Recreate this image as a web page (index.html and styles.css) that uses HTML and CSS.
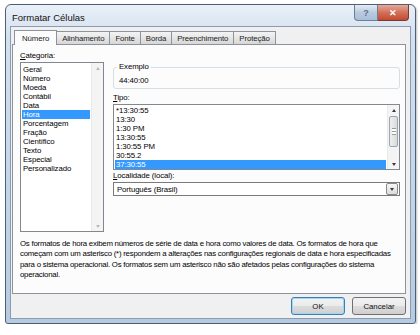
FILE: index.html
```html
<!DOCTYPE html>
<html lang="pt-BR">
<head>
  <meta charset="UTF-8">
  <title>Formatar Células</title>
  <link rel="stylesheet" href="styles.css">
</head>
<body>

  <div class="window">
    <div class="titlebar">
      <div class="title">Formatar Células</div>
      <div class="caption-btns">
        <div class="cap help">?</div>
        <div class="cap close">&#x2715;</div>
      </div>
    </div>

    <div class="client">
      <div class="tabs">
        <div class="tab active">Número</div>
        <div class="tab">Alinhamento</div>
        <div class="tab">Fonte</div>
        <div class="tab">Borda</div>
        <div class="tab">Preenchimento</div>
        <div class="tab">Proteção</div>
      </div>

      <div class="panel">
        <div class="columns">
          <div class="left-col">
            <div class="label"><u>C</u>ategoria:</div>
            <div class="listbox cat-list">
              <div class="items">
                <div class="item">Geral</div>
                <div class="item">Número</div>
                <div class="item">Moeda</div>
                <div class="item">Contábil</div>
                <div class="item">Data</div>
                <div class="item selected">Hora</div>
                <div class="item">Porcentagem</div>
                <div class="item">Fração</div>
                <div class="item">Científico</div>
                <div class="item">Texto</div>
                <div class="item">Especial</div>
                <div class="item">Personalizado</div>
              </div>
              <div class="scrollbar disabled">
                <div class="arrow up"></div>
                <div class="track"></div>
                <div class="arrow down"></div>
              </div>
            </div>
          </div>

          <div class="right-col">
            <fieldset class="sample">
              <legend>Exemplo</legend>
              <div class="sample-value">44:40:00</div>
            </fieldset>

            <div class="label"><u>T</u>ipo:</div>
            <div class="listbox type-list">
              <div class="items">
                <div class="item">*13:30:55</div>
                <div class="item">13:30</div>
                <div class="item">1:30 PM</div>
                <div class="item">13:30:55</div>
                <div class="item">1:30:55 PM</div>
                <div class="item">30:55.2</div>
                <div class="item selected">37:30:55</div>
              </div>
              <div class="scrollbar">
                <div class="arrow up"></div>
                <div class="track"><div class="thumb"></div></div>
                <div class="arrow down"></div>
              </div>
            </div>

            <div class="label"><u>L</u>ocalidade (local):</div>
            <div class="combo">
              <span>Português (Brasil)</span>
              <div class="combo-btn"><div class="arrow down"></div></div>
            </div>
          </div>
        </div>

        <p class="desc">Os formatos de hora exibem números de série de data e hora como valores de data. Os formatos de hora que começam com um asterisco (*) respondem a alterações nas configurações regionais de data e hora especificadas para o sistema operacional. Os formatos sem um asterisco não são afetados pelas configurações do sistema operacional.</p>
      </div>

      <div class="buttons">
        <button class="btn default">OK</button>
        <button class="btn">Cancelar</button>
      </div>
    </div>
  </div>

</body>
</html>
```

FILE: styles.css
```css
body {
  margin: 0;
  background: #fff;
  font-family: "Liberation Sans", Arial, sans-serif;
  font-size: 7.8px;
  letter-spacing: -0.1px;
  color: #000;
}
.window {
  margin: 4px 0 0 5px;
  width: 411px;
  height: 320px;
  box-sizing: border-box;
  border: 1px solid #4f6076;
  border-radius: 6px 6px 3px 3px;
  background: linear-gradient(180deg, #e9f0f8 0%, #d3e1ef 10%, #c2d5e9 60%, #b6cbe2 100%);
  box-shadow: 1px 1px 2px rgba(0, 0, 0, 0.25);
  display: flex;
  flex-direction: column;
}
.titlebar {
  height: 21px;
  display: flex;
  justify-content: space-between;
  align-items: flex-start;
  padding-left: 6px;
}
.title {
  font-size: 9.5px;
  letter-spacing: 0;
  padding-top: 7px;
  color: #111;
}
.caption-btns {
  display: flex;
  margin-right: 6px;
}
.cap {
  height: 15px;
  display: flex;
  align-items: center;
  justify-content: center;
  border: 1px solid #6d7e94;
  border-top: none;
  color: #fff;
  font-size: 9px;
}
.help {
  width: 22px;
  border-radius: 0 0 0 4px;
  background: linear-gradient(180deg, #e4ecf5, #b9cbe0 50%, #a9bfd8);
  color: #5e6f86;
  font-weight: bold;
}
.close {
  width: 30px;
  border-left: none;
  border-radius: 0 0 4px 0;
  background: linear-gradient(180deg, #e9a99a, #d2715a 50%, #c24a31);
  border-color: #7d3a2c;
  font-weight: bold;
}
.client {
  flex: 1;
  margin: 0 4px 4px;
  background: #f0f0f0;
  border: 1px solid #8c9bae;
  padding: 3px 4px 0 1px;
  display: flex;
  flex-direction: column;
}
.tabs {
  display: flex;
  align-items: flex-end;
  padding-left: 2px;
  height: 14px;
}
.tab {
  height: 13px;
  box-sizing: border-box;
  padding: 0 5px;
  border: 1px solid #8d939c;
  border-bottom: none;
  margin-right: -1px;
  background: linear-gradient(180deg, #f3f3f3, #e6e6e6 50%, #d7d7d7);
  display: flex;
  align-items: center;
  color: #222;
}
.tab.active {
  height: 15px;
  background: #fcfcfc;
  position: relative;
  top: 1px;
  z-index: 1;
  padding: 0 7px;
}
.panel {
  height: 250px;
  box-sizing: border-box;
  border: 1px solid #8d939c;
  background: #fcfcfc;
  padding: 6px 4px 0 7px;
}
.columns {
  display: flex;
  gap: 9px;
}
.label {
  height: 10px;
  line-height: 10px;
  margin-bottom: 1px;
}
.listbox {
  border: 1px solid #828790;
  background: #fff;
  display: flex;
  box-sizing: border-box;
}
.items {
  flex: 1;
  padding: 1px 1px 0;
}
.item {
  height: 9px;
  line-height: 9px;
  padding-left: 1px;
  white-space: nowrap;
}
.item.selected {
  background: #3399ff;
  color: #fff;
}
.cat-list {
  width: 84px;
  height: 170px;
}
.cat-list .items {
  padding-top: 2px;
}
.scrollbar {
  width: 11px;
  display: flex;
  flex-direction: column;
  background: #f4f4f4;
  border-left: 1px solid #eaeaea;
}
.scrollbar .arrow {
  height: 10px;
}
.scrollbar .track {
  flex: 1;
  padding: 0 1px;
}
.thumb {
  margin-top: 1px;
  height: 29px;
  border: 1px solid #9aa5b2;
  border-radius: 2px;
  background: linear-gradient(90deg, #f0f0f0, #dadada);
  display: flex;
  align-items: center;
  justify-content: center;
}
.thumb::after {
  content: "";
  width: 4px;
  height: 5px;
  border-top: 1px solid #999;
  border-bottom: 1px solid #999;
  background: linear-gradient(#fff 33%, #999 33%, #999 66%, #fff 66%);
}
.arrow {
  display: flex;
  align-items: center;
  justify-content: center;
}
.arrow::after {
  content: "";
  border-left: 2.5px solid transparent;
  border-right: 2.5px solid transparent;
}
.arrow.up::after {
  border-bottom: 3px solid #3a3a3a;
}
.arrow.down::after {
  border-top: 3px solid #3a3a3a;
}
.disabled .arrow.up::after {
  border-bottom-color: #b9b9b9;
}
.disabled .arrow.down::after {
  border-top-color: #b9b9b9;
}
.right-col {
  flex: 1;
  padding-right: 1px;
}
.sample {
  margin: 12px 0 4px;
  padding: 2px 5px 4px;
  border: 1px solid #d5dfe5;
  border-radius: 3px;
  height: 26px;
  box-sizing: border-box;
}
.sample legend {
  padding: 0 2px;
  margin-left: -2px;
  line-height: 8px;
}
.sample-value {
  padding-top: 3px;
}
.type-list {
  height: 66px;
  margin-bottom: 1px;
}
.type-list .items {
  padding-top: 1px;
}
.combo {
  height: 14px;
  border: 1px solid #7a7a7a;
  background: #fff;
  display: flex;
  align-items: center;
  justify-content: space-between;
  padding-left: 3px;
  box-sizing: border-box;
}
.combo-btn {
  width: 10px;
  height: 10px;
  margin-right: 1px;
  border: 1px solid #8a8a8a;
  border-radius: 2px;
  background: linear-gradient(#f6f6f6, #dcdcdc);
  display: flex;
  justify-content: center;
}
.desc {
  margin: 7px 0 0;
  line-height: 10.3px;
  letter-spacing: -0.22px;
  padding-right: 1px;
}
.buttons {
  display: flex;
  justify-content: flex-end;
  gap: 7px;
  padding: 3px 0 0;
}
.btn {
  width: 54px;
  height: 18px;
  font-family: inherit;
  font-size: 7.8px;
  border: 1px solid #707070;
  border-radius: 3px;
  background: linear-gradient(180deg, #f2f2f2 0%, #ebebeb 49%, #dddddd 50%, #cfcfcf 100%);
  color: #111;
  padding: 0;
}
.btn.default {
  border-color: #3c7fb1;
  box-shadow: inset 0 0 0 1px #9fd6f5;
}
```
